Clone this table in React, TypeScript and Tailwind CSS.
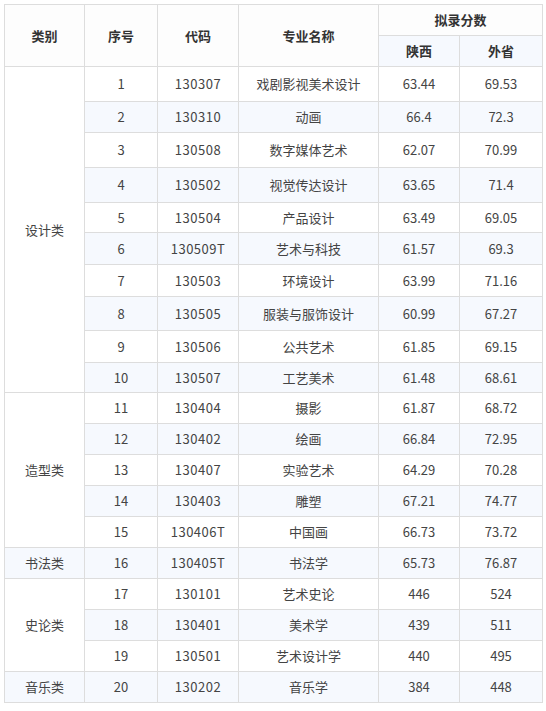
import React from 'react';

type Row = { no: number; code: string; name: string; sx: string; ws: string; h: string };

const rows: Row[] = [
    { no: 1, code: '130307', name: '戏剧影视美术设计', sx: '63.44', ws: '69.53', h: 'h-[35px]' },
    { no: 2, code: '130310', name: '动画', sx: '66.4', ws: '72.3', h: 'h-[31px]' },
    { no: 3, code: '130508', name: '数字媒体艺术', sx: '62.07', ws: '70.99', h: 'h-[35px]' },
    { no: 4, code: '130502', name: '视觉传达设计', sx: '63.65', ws: '71.4', h: 'h-[35px]' },
    { no: 5, code: '130504', name: '产品设计', sx: '63.49', ws: '69.05', h: 'h-[30px]' },
    { no: 6, code: '130509T', name: '艺术与科技', sx: '61.57', ws: '69.3', h: 'h-[32px]' },
    { no: 7, code: '130503', name: '环境设计', sx: '63.99', ws: '71.16', h: 'h-[32px]' },
    { no: 8, code: '130505', name: '服装与服饰设计', sx: '60.99', ws: '67.27', h: 'h-[34px]' },
    { no: 9, code: '130506', name: '公共艺术', sx: '61.85', ws: '69.15', h: 'h-[32px]' },
    { no: 10, code: '130507', name: '工艺美术', sx: '61.48', ws: '68.61', h: 'h-[30px]' },
    { no: 11, code: '130404', name: '摄影', sx: '61.87', ws: '68.72', h: 'h-[31px]' },
    { no: 12, code: '130402', name: '绘画', sx: '66.84', ws: '72.95', h: 'h-[31px]' },
    { no: 13, code: '130407', name: '实验艺术', sx: '64.29', ws: '70.28', h: 'h-[31px]' },
    { no: 14, code: '130403', name: '雕塑', sx: '67.21', ws: '74.77', h: 'h-[31px]' },
    { no: 15, code: '130406T', name: '中国画', sx: '66.73', ws: '73.72', h: 'h-[31px]' },
    { no: 16, code: '130405T', name: '书法学', sx: '65.73', ws: '76.87', h: 'h-[31px]' },
    { no: 17, code: '130101', name: '艺术史论', sx: '446', ws: '524', h: 'h-[31px]' },
    { no: 18, code: '130401', name: '美术学', sx: '439', ws: '511', h: 'h-[31px]' },
    { no: 19, code: '130501', name: '艺术设计学', sx: '440', ws: '495', h: 'h-[31px]' },
    { no: 20, code: '130202', name: '音乐学', sx: '384', ws: '448', h: 'h-[31px]' },
];

// category label starts at row number -> [label, rowspan]
const groups: Record<number, [string, number]> = {
    1: ['设计类', 10],
    11: ['造型类', 5],
    16: ['书法类', 1],
    17: ['史论类', 3],
    20: ['音乐类', 1],
};

const td = 'border border-[#dddddd] text-center align-middle p-0';
const th = 'border border-[#dddddd] text-center align-middle p-0 font-bold text-[#333333]';

const App = () => {
    return (
        <div className="min-h-screen bg-white pt-[4px] pl-[4px]" style={{ fontFamily: '"Noto Sans CJK SC", "Noto Sans", sans-serif' }}>
            <table className="table-fixed border-collapse w-[538px] text-[13px] text-[#444444]">
                <colgroup>
                    <col className="w-[80px]" />
                    <col className="w-[73px]" />
                    <col className="w-[81px]" />
                    <col className="w-[140px]" />
                    <col className="w-[81px]" />
                    <col className="w-[83px]" />
                </colgroup>
                <thead>
                    <tr className="h-[31px] bg-[#fdfdfd]">
                        <th rowSpan={2} className={th}>类别</th>
                        <th rowSpan={2} className={th}>序号</th>
                        <th rowSpan={2} className={th}>代码</th>
                        <th rowSpan={2} className={th}>专业名称</th>
                        <th colSpan={2} className={th}>拟录分数</th>
                    </tr>
                    <tr className="h-[31px] bg-[#f6f9fe]">
                        <th className={th}>陕西</th>
                        <th className={th}>外省</th>
                    </tr>
                </thead>
                <tbody>
                    {rows.map((r) => (
                        <tr key={r.no} className={`${r.h} ${r.no % 2 === 0 ? 'bg-[#f6f9fe]' : 'bg-white'}`}>
                            {groups[r.no] && (
                                <td rowSpan={groups[r.no][1]} className={td}>
                                    {groups[r.no][0]}
                                </td>
                            )}
                            <td className={td}>{r.no}</td>
                            <td className={`${td} tracking-[0.5px]`}>{r.code}</td>
                            <td className={td}>{r.name}</td>
                            <td className={td}>{r.sx}</td>
                            <td className={td}>{r.ws}</td>
                        </tr>
                    ))}
                </tbody>
            </table>
        </div>
    );
};

export default App;
